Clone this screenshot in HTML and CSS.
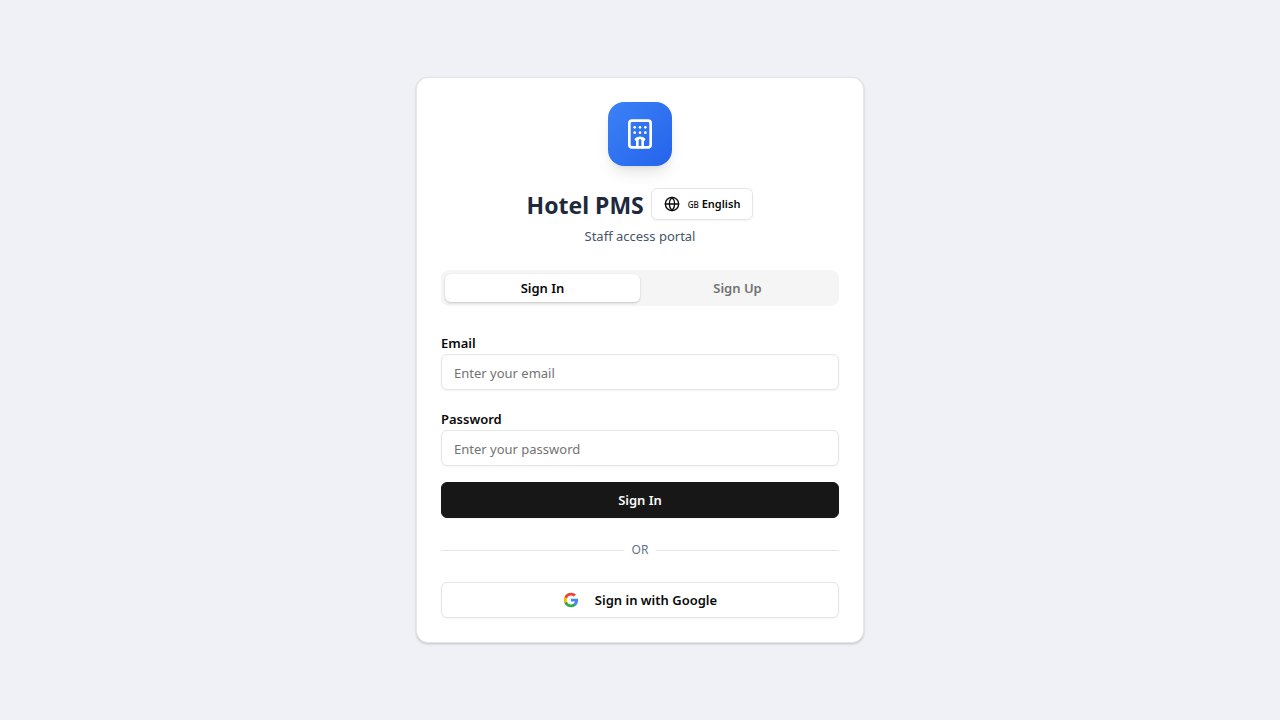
FILE: index.html
```html
<!DOCTYPE html>
<html lang="en">
<head>
<meta charset="utf-8">
<meta name="viewport" content="width=device-width, initial-scale=1">
<title>Hotel PMS</title>
<link rel="stylesheet" href="styles.css">
</head>
<body>
<main class="card">
  <header class="header">
    <div class="logo">
      <svg class="logo-icon" viewBox="0 0 24 24" fill="none" stroke="currentColor" stroke-width="2" stroke-linecap="round" stroke-linejoin="round" aria-hidden="true">
        <path d="M10 22v-6.57"/><path d="M12 11h.01"/><path d="M12 7h.01"/><path d="M14 15.43V22"/><path d="M15 16a5 5 0 0 0-6 0"/><path d="M16 11h.01"/><path d="M16 7h.01"/><path d="M8 11h.01"/><path d="M8 7h.01"/><rect x="4" y="2" width="16" height="20" rx="2"/>
      </svg>
    </div>
    <div class="title-row">
      <h1 class="title">Hotel PMS</h1>
      <button class="language" type="button">
        <svg class="globe" viewBox="0 0 24 24" fill="none" stroke="currentColor" stroke-width="2" stroke-linecap="round" stroke-linejoin="round" aria-hidden="true">
          <circle cx="12" cy="12" r="10"/><path d="M12 2a14.5 14.5 0 0 0 0 20 14.5 14.5 0 0 0 0-20"/><path d="M2 12h20"/>
        </svg>
        <span><span class="flag">GB</span> English</span>
      </button>
    </div>
    <p class="subtitle">Staff access portal</p>
  </header>
  <div class="tabs" role="tablist">
    <button class="tab tab-active" type="button" role="tab" aria-selected="true">Sign In</button>
    <button class="tab" type="button" role="tab" aria-selected="false">Sign Up</button>
  </div>
  <form class="form">
    <div class="field">
      <label class="label" for="email">Email</label>
      <input class="input" id="email" type="email" placeholder="Enter your email">
    </div>
    <div class="field">
      <label class="label" for="password">Password</label>
      <input class="input" id="password" type="password" placeholder="Enter your password">
    </div>
    <button class="button button-primary" type="submit">Sign In</button>
  </form>
  <div class="divider">OR</div>
  <button class="button button-outline" type="button">
    <svg class="google" viewBox="0 0 24 24" aria-hidden="true">
      <path fill="#4285F4" d="M22.56 12.25c0-.78-.07-1.53-.2-2.25H12v4.26h5.92c-.26 1.37-1.04 2.53-2.21 3.31v2.77h3.57c2.08-1.92 3.28-4.74 3.28-8.09z"/>
      <path fill="#34A853" d="M12 23c2.97 0 5.46-.98 7.28-2.66l-3.57-2.77c-.98.66-2.23 1.06-3.71 1.06-2.86 0-5.29-1.93-6.16-4.53H2.18v2.84C3.99 20.53 7.7 23 12 23z"/>
      <path fill="#FBBC05" d="M5.84 14.09c-.22-.66-.35-1.36-.35-2.09s.13-1.43.35-2.09V7.07H2.18C1.43 8.55 1 10.22 1 12s.43 3.45 1.18 4.93l2.85-2.22.81-.62z"/>
      <path fill="#EA4335" d="M12 5.38c1.62 0 3.06.56 4.21 1.64l3.15-3.15C17.45 2.09 14.97 1 12 1 7.7 1 3.99 3.47 2.18 7.07l3.66 2.84c.87-2.6 3.3-4.53 6.16-4.53z"/>
    </svg>
    Sign in with Google
  </button>
</main>
</body>
</html>
```
FILE: styles.css
```css
*, *::before, *::after {
  box-sizing: border-box;
}

body {
  margin: 0;
  min-height: 100vh;
  display: flex;
  align-items: center;
  justify-content: center;
  padding: 16px;
  background: #f0f1f6;
  color: #0a0a0a;
  font-family: "Segoe UI", "Noto Sans", sans-serif;
  font-size: 13px;
  line-height: 20px;
}

button, input {
  font: inherit;
  color: inherit;
}

button {
  cursor: pointer;
}

.card {
  width: 100%;
  max-width: 448px;
  padding: 24px;
  background: #fff;
  border: 1px solid #e5e5e5;
  border-radius: 12px;
  box-shadow: 0 1px 3px rgba(0, 0, 0, 0.1), 0 1px 2px rgba(0, 0, 0, 0.1);
}

.header {
  display: flex;
  flex-direction: column;
  align-items: center;
}

.logo {
  display: flex;
  align-items: center;
  justify-content: center;
  width: 64px;
  height: 64px;
  margin-bottom: 21px;
  border-radius: 16px;
  color: #fff;
  background: linear-gradient(135deg, #3b82f6, #2563eb);
  box-shadow: 0 10px 15px -3px rgba(0, 0, 0, 0.1), 0 4px 6px -4px rgba(0, 0, 0, 0.1);
}

.logo-icon {
  width: 32px;
  height: 32px;
}

.title-row {
  display: flex;
  align-items: center;
  gap: 7px;
}

.title {
  margin: 0;
  padding-top: 2px;
  color: #1e293b;
  font-size: 23px;
  font-weight: 700;
  line-height: 32px;
}

.language {
  display: flex;
  align-items: center;
  gap: 8px;
  height: 32px;
  padding: 0 12px;
  background: #fff;
  border: 1px solid #e5e5e5;
  border-radius: 6px;
  box-shadow: 0 1px 2px rgba(0, 0, 0, 0.05);
  font-size: 11px;
  font-weight: 600;
  line-height: 16px;
}

.globe {
  width: 16px;
  height: 16px;
}

.flag {
  font-size: 8px;
  font-weight: 500;
}

.subtitle {
  margin: 5px 0 24px;
  color: #475569;
}

.tabs {
  display: grid;
  grid-template-columns: 1fr 1fr;
  padding: 4px;
  background: #f5f5f5;
  border-radius: 8px;
}

.tab {
  height: 28px;
  padding: 0 12px;
  background: transparent;
  border: 0;
  border-radius: 6px;
  color: #737373;
  font-weight: 600;
}

.tab-active {
  background: #fff;
  color: #0a0a0a;
  box-shadow: 0 1px 3px rgba(0, 0, 0, 0.1), 0 1px 2px rgba(0, 0, 0, 0.1);
}

.form {
  display: flex;
  flex-direction: column;
  gap: 16px;
  margin-top: 27px;
}

.field {
  display: flex;
  flex-direction: column;
  gap: 1px;
}

.field + .field {
  margin-top: 3px;
}

.label {
  font-weight: 600;
}

.input {
  width: 100%;
  height: 36px;
  padding: 2px 12px 0;
  background: #fff;
  border: 1px solid #e5e5e5;
  border-radius: 6px;
  box-shadow: 0 1px 2px rgba(0, 0, 0, 0.05);
}

.input::placeholder {
  color: #737373;
  opacity: 1;
}

.button {
  display: flex;
  align-items: center;
  justify-content: center;
  gap: 16px;
  width: 100%;
  height: 36px;
  padding: 0 16px;
  border: 1px solid #e5e5e5;
  border-radius: 6px;
  box-shadow: 0 1px 2px rgba(0, 0, 0, 0.05);
  font-weight: 600;
}

.button-primary {
  background: #171717;
  border-color: #171717;
  color: #fafafa;
}

.button-outline {
  background: #fff;
}

.google {
  width: 16px;
  height: 16px;
}

.divider {
  display: flex;
  align-items: center;
  gap: 8px;
  margin: 24px 0;
  color: #64748b;
  font-size: 12px;
  line-height: 16px;
}

.divider::before,
.divider::after {
  content: "";
  flex: 1;
  height: 1px;
  background: #e5e5e5;
}
```
